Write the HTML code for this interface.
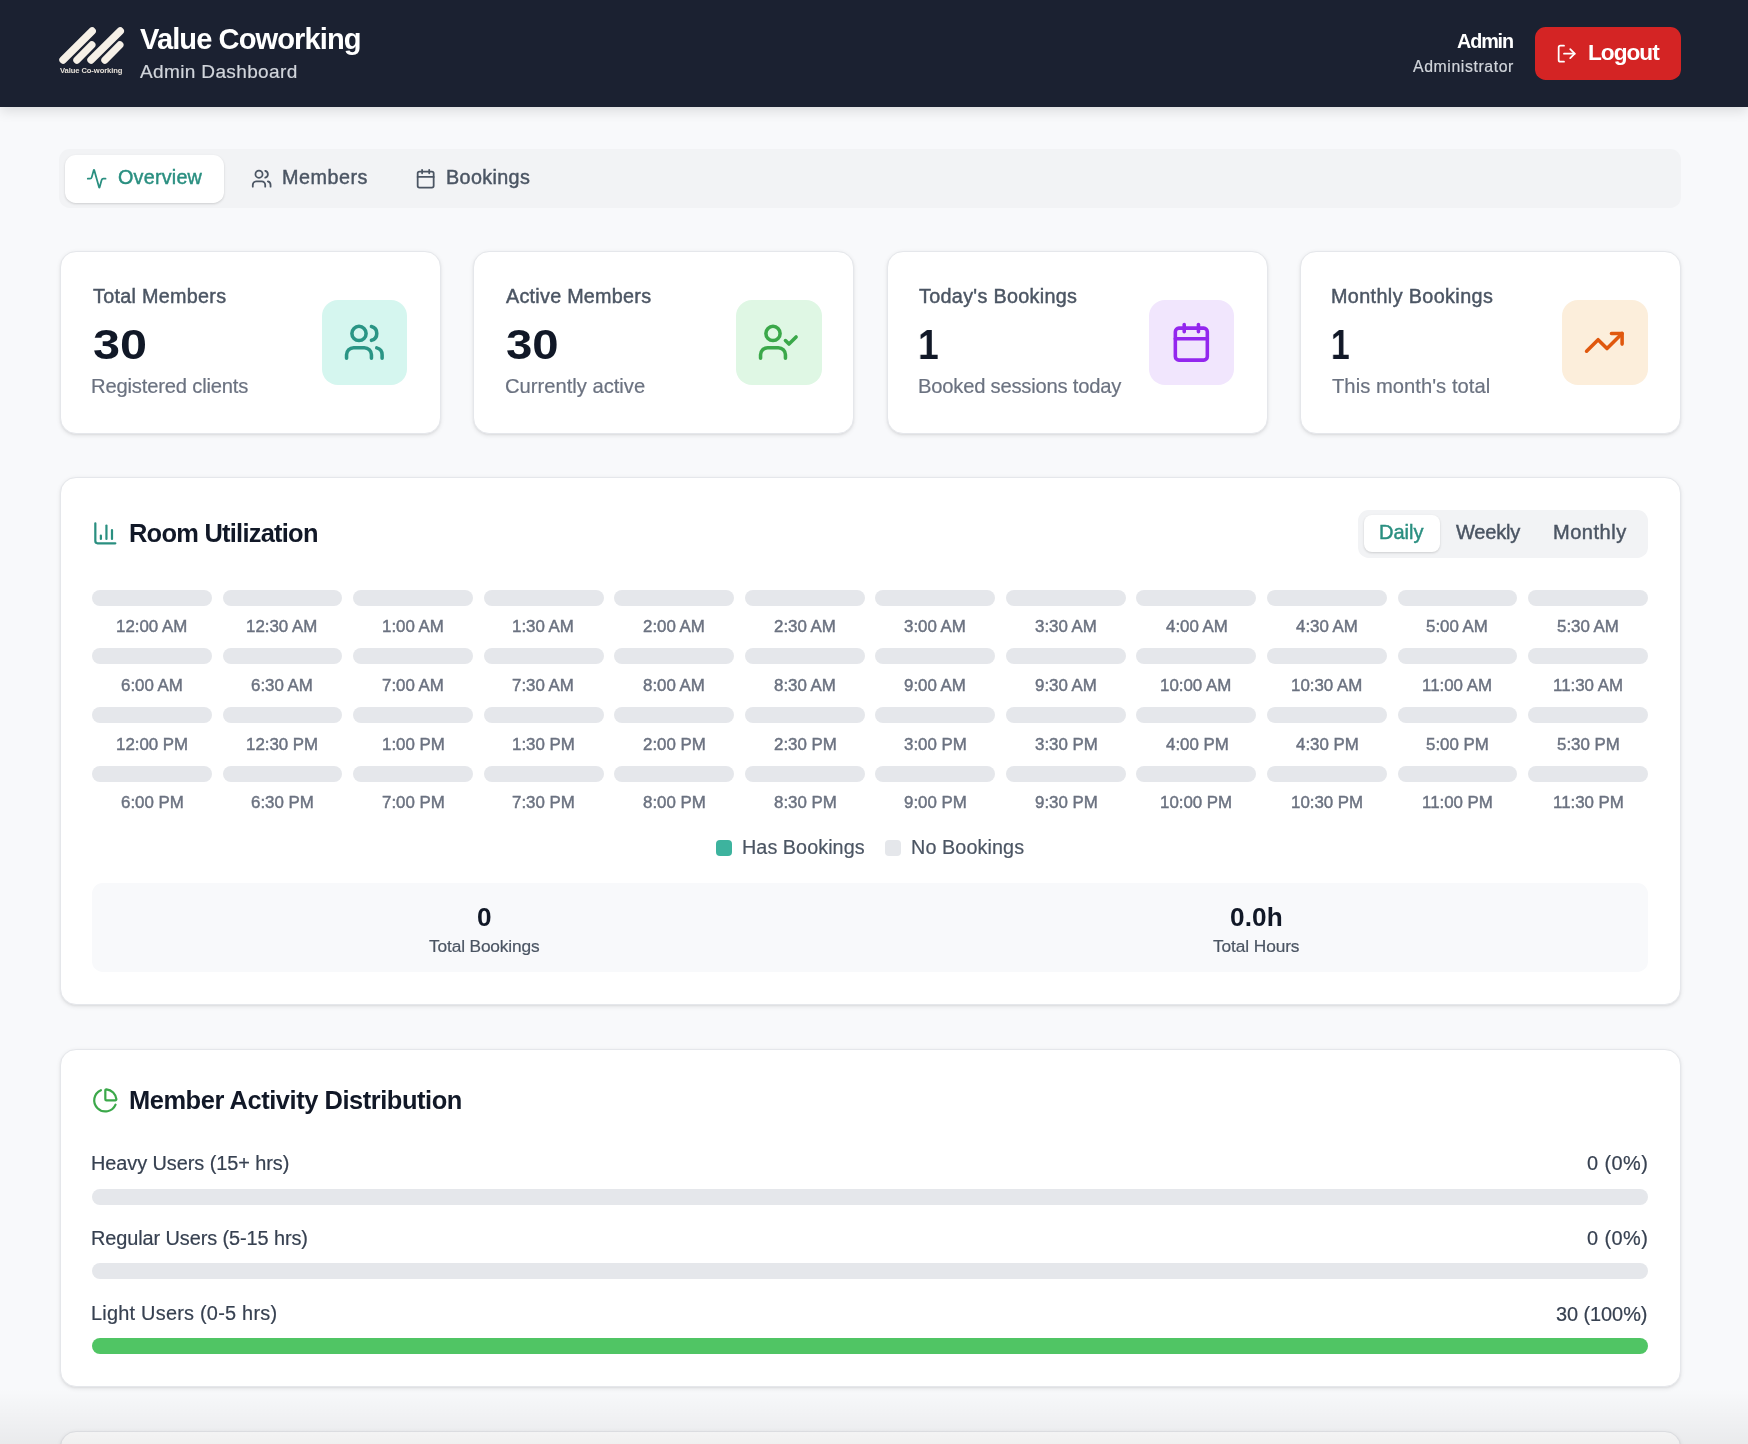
<!DOCTYPE html>
<html><head><meta charset="utf-8"><title>Value Coworking Admin Dashboard</title>
<style>
html,body{margin:0;padding:0;}
body{width:1748px;height:1444px;overflow:hidden;position:relative;background:#F8F9FB;font-family:"Liberation Sans",sans-serif;}
.b{position:absolute;}
.ic{position:absolute;overflow:visible;}
.t{position:absolute;white-space:nowrap;z-index:3;will-change:transform;}
</style></head><body>
<div class="b" style="left:0.00px;top:0.00px;width:1748.00px;height:107.00px;background:#1B2131;box-shadow:0 4px 12px rgba(0,0,0,0.12);z-index:1"></div>
<svg class="ic" style="left:0;top:0;width:200px;height:107px;z-index:2" viewBox="0 0 200 107"><g stroke="#F6F0E7" stroke-width="7.4" stroke-linecap="round"><line x1="63.0" y1="60.0" x2="92.2" y2="31.0"/><line x1="77.0" y1="60.0" x2="91.8" y2="45.0"/><line x1="91.0" y1="60.0" x2="120.3" y2="31.0"/><line x1="105.0" y1="60.0" x2="119.8" y2="45.0"/></g></svg>
<div class="b" style="left:1535.00px;top:27.00px;width:146.00px;height:53.00px;background:#D42424;border-radius:10.67px;z-index:2"></div>
<svg class="ic" style="z-index:3;left:1555.60px;top:43.20px;width:21.33px;height:21.33px" viewBox="0 0 24 24" fill="none" stroke="#ffffff" stroke-width="2" stroke-linecap="round" stroke-linejoin="round"><path d="M9 21H5a2 2 0 0 1-2-2V5a2 2 0 0 1 2-2h4"/><polyline points="16 17 21 12 16 7"/><line x1="21" x2="9" y1="12" y2="12"/></svg>
<div class="b" style="left:59.30px;top:149.20px;width:1621.40px;height:58.70px;background:#F2F3F5;border-radius:10.67px"></div>
<div class="b" style="left:65.00px;top:155.00px;width:159.00px;height:48.00px;background:#fff;border-radius:10.67px;box-shadow:0 1px 3px rgba(0,0,0,0.10),0 1px 2px rgba(0,0,0,0.06)"></div>
<svg class="ic" style="left:86.10px;top:168.00px;width:21.33px;height:21.33px" viewBox="0 0 24 24" fill="none" stroke="#2A8F80" stroke-width="2" stroke-linecap="round" stroke-linejoin="round"><path d="M22 12h-2.48a2 2 0 0 0-1.93 1.46l-2.35 8.36a.25.25 0 0 1-.48 0L9.24 2.18a.25.25 0 0 0-.48 0l-2.35 8.36A2 2 0 0 1 4.49 12H2"/></svg>
<svg class="ic" style="left:251.10px;top:168.20px;width:21.33px;height:21.33px" viewBox="0 0 24 24" fill="none" stroke="#4B5563" stroke-width="2" stroke-linecap="round" stroke-linejoin="round"><path d="M16 21v-2a4 4 0 0 0-4-4H6a4 4 0 0 0-4 4v2"/><circle cx="9" cy="7" r="4"/><path d="M22 21v-2a4 4 0 0 0-3-3.87"/><path d="M16 3.13a4 4 0 0 1 0 7.75"/></svg>
<svg class="ic" style="left:415.00px;top:168.20px;width:21.33px;height:21.33px" viewBox="0 0 24 24" fill="none" stroke="#4B5563" stroke-width="2" stroke-linecap="round" stroke-linejoin="round"><path d="M8 2v4"/><path d="M16 2v4"/><rect width="18" height="18" x="3" y="4" rx="2"/><path d="M3 10h18"/></svg>
<div class="b" style="left:59.80px;top:251.30px;width:381.00px;height:182.50px;background:#fff;border:1px solid #E5E7EB;border-radius:16px;box-shadow:0 1.5px 4px rgba(0,0,0,0.08),0 1px 2px rgba(0,0,0,0.05);box-sizing:border-box"></div>
<div class="b" style="left:473.40px;top:251.30px;width:381.00px;height:182.50px;background:#fff;border:1px solid #E5E7EB;border-radius:16px;box-shadow:0 1.5px 4px rgba(0,0,0,0.08),0 1px 2px rgba(0,0,0,0.05);box-sizing:border-box"></div>
<div class="b" style="left:886.90px;top:251.30px;width:381.00px;height:182.50px;background:#fff;border:1px solid #E5E7EB;border-radius:16px;box-shadow:0 1.5px 4px rgba(0,0,0,0.08),0 1px 2px rgba(0,0,0,0.05);box-sizing:border-box"></div>
<div class="b" style="left:1300.00px;top:251.30px;width:381.00px;height:182.50px;background:#fff;border:1px solid #E5E7EB;border-radius:16px;box-shadow:0 1.5px 4px rgba(0,0,0,0.08),0 1px 2px rgba(0,0,0,0.05);box-sizing:border-box"></div>
<div class="b" style="left:322.00px;top:300.00px;width:85.30px;height:84.90px;background:#D5F6EF;border-radius:16px"></div>
<svg class="ic" style="left:342.87px;top:321.07px;width:42.67px;height:42.67px" viewBox="0 0 24 24" fill="none" stroke="#2A9585" stroke-width="2" stroke-linecap="round" stroke-linejoin="round"><path d="M16 21v-2a4 4 0 0 0-4-4H6a4 4 0 0 0-4 4v2"/><circle cx="9" cy="7" r="4"/><path d="M22 21v-2a4 4 0 0 0-3-3.87"/><path d="M16 3.13a4 4 0 0 1 0 7.75"/></svg>
<div class="b" style="left:736.30px;top:300.00px;width:85.30px;height:84.90px;background:#DFF7E4;border-radius:16px"></div>
<svg class="ic" style="left:757.17px;top:321.07px;width:42.67px;height:42.67px" viewBox="0 0 24 24" fill="none" stroke="#3BA84A" stroke-width="2" stroke-linecap="round" stroke-linejoin="round"><path d="M16 21v-2a4 4 0 0 0-4-4H6a4 4 0 0 0-4 4v2"/><circle cx="9" cy="7" r="4"/><polyline points="16 11 18 13 22 9"/></svg>
<div class="b" style="left:1148.90px;top:300.00px;width:85.30px;height:84.90px;background:#F1E6FD;border-radius:16px"></div>
<svg class="ic" style="left:1169.77px;top:321.07px;width:42.67px;height:42.67px" viewBox="0 0 24 24" fill="none" stroke="#9327EE" stroke-width="2" stroke-linecap="round" stroke-linejoin="round"><path d="M8 2v4"/><path d="M16 2v4"/><rect width="18" height="18" x="3" y="4" rx="2"/><path d="M3 10h18"/></svg>
<div class="b" style="left:1562.30px;top:300.00px;width:85.30px;height:84.90px;background:#FCEEDB;border-radius:16px"></div>
<svg class="ic" style="left:1583.17px;top:321.07px;width:42.67px;height:42.67px" viewBox="0 0 24 24" fill="none" stroke="#E0580E" stroke-width="2" stroke-linecap="round" stroke-linejoin="round"><polyline points="22 7 13.5 15.5 8.5 10.5 2 17"/><polyline points="16 7 22 7 22 13"/></svg>
<div class="b" style="left:59.50px;top:477.20px;width:1621.10px;height:528.00px;background:#fff;border:1px solid #E5E7EB;border-radius:16px;box-shadow:0 1.5px 4px rgba(0,0,0,0.08),0 1px 2px rgba(0,0,0,0.05);box-sizing:border-box"></div>
<svg class="ic" style="left:91.90px;top:520.10px;width:26.67px;height:26.67px" viewBox="0 0 24 24" fill="none" stroke="#2A8F80" stroke-width="2" stroke-linecap="round" stroke-linejoin="round"><path d="M3 3v16a2 2 0 0 0 2 2h16"/><path d="M18 17V9"/><path d="M13 17V5"/><path d="M8 17v-3"/></svg>
<div class="b" style="left:1358.00px;top:510.00px;width:290.00px;height:48.00px;background:#F2F3F5;border-radius:10.67px"></div>
<div class="b" style="left:1364.00px;top:515.00px;width:76.30px;height:36.80px;background:#fff;border-radius:8px;box-shadow:0 1px 3px rgba(0,0,0,0.10),0 1px 2px rgba(0,0,0,0.06)"></div>
<div class="b" style="left:92.00px;top:590.00px;width:119.89px;height:16.00px;background:#E5E7EB;border-radius:8px"></div>
<div class="b" style="left:222.56px;top:590.00px;width:119.89px;height:16.00px;background:#E5E7EB;border-radius:8px"></div>
<div class="b" style="left:353.11px;top:590.00px;width:119.89px;height:16.00px;background:#E5E7EB;border-radius:8px"></div>
<div class="b" style="left:483.67px;top:590.00px;width:119.89px;height:16.00px;background:#E5E7EB;border-radius:8px"></div>
<div class="b" style="left:614.22px;top:590.00px;width:119.89px;height:16.00px;background:#E5E7EB;border-radius:8px"></div>
<div class="b" style="left:744.78px;top:590.00px;width:119.89px;height:16.00px;background:#E5E7EB;border-radius:8px"></div>
<div class="b" style="left:875.34px;top:590.00px;width:119.89px;height:16.00px;background:#E5E7EB;border-radius:8px"></div>
<div class="b" style="left:1005.89px;top:590.00px;width:119.89px;height:16.00px;background:#E5E7EB;border-radius:8px"></div>
<div class="b" style="left:1136.45px;top:590.00px;width:119.89px;height:16.00px;background:#E5E7EB;border-radius:8px"></div>
<div class="b" style="left:1267.00px;top:590.00px;width:119.89px;height:16.00px;background:#E5E7EB;border-radius:8px"></div>
<div class="b" style="left:1397.56px;top:590.00px;width:119.89px;height:16.00px;background:#E5E7EB;border-radius:8px"></div>
<div class="b" style="left:1528.11px;top:590.00px;width:119.89px;height:16.00px;background:#E5E7EB;border-radius:8px"></div>
<div class="b" style="left:92.00px;top:648.00px;width:119.89px;height:16.00px;background:#E5E7EB;border-radius:8px"></div>
<div class="b" style="left:222.56px;top:648.00px;width:119.89px;height:16.00px;background:#E5E7EB;border-radius:8px"></div>
<div class="b" style="left:353.11px;top:648.00px;width:119.89px;height:16.00px;background:#E5E7EB;border-radius:8px"></div>
<div class="b" style="left:483.67px;top:648.00px;width:119.89px;height:16.00px;background:#E5E7EB;border-radius:8px"></div>
<div class="b" style="left:614.22px;top:648.00px;width:119.89px;height:16.00px;background:#E5E7EB;border-radius:8px"></div>
<div class="b" style="left:744.78px;top:648.00px;width:119.89px;height:16.00px;background:#E5E7EB;border-radius:8px"></div>
<div class="b" style="left:875.34px;top:648.00px;width:119.89px;height:16.00px;background:#E5E7EB;border-radius:8px"></div>
<div class="b" style="left:1005.89px;top:648.00px;width:119.89px;height:16.00px;background:#E5E7EB;border-radius:8px"></div>
<div class="b" style="left:1136.45px;top:648.00px;width:119.89px;height:16.00px;background:#E5E7EB;border-radius:8px"></div>
<div class="b" style="left:1267.00px;top:648.00px;width:119.89px;height:16.00px;background:#E5E7EB;border-radius:8px"></div>
<div class="b" style="left:1397.56px;top:648.00px;width:119.89px;height:16.00px;background:#E5E7EB;border-radius:8px"></div>
<div class="b" style="left:1528.11px;top:648.00px;width:119.89px;height:16.00px;background:#E5E7EB;border-radius:8px"></div>
<div class="b" style="left:92.00px;top:707.00px;width:119.89px;height:16.00px;background:#E5E7EB;border-radius:8px"></div>
<div class="b" style="left:222.56px;top:707.00px;width:119.89px;height:16.00px;background:#E5E7EB;border-radius:8px"></div>
<div class="b" style="left:353.11px;top:707.00px;width:119.89px;height:16.00px;background:#E5E7EB;border-radius:8px"></div>
<div class="b" style="left:483.67px;top:707.00px;width:119.89px;height:16.00px;background:#E5E7EB;border-radius:8px"></div>
<div class="b" style="left:614.22px;top:707.00px;width:119.89px;height:16.00px;background:#E5E7EB;border-radius:8px"></div>
<div class="b" style="left:744.78px;top:707.00px;width:119.89px;height:16.00px;background:#E5E7EB;border-radius:8px"></div>
<div class="b" style="left:875.34px;top:707.00px;width:119.89px;height:16.00px;background:#E5E7EB;border-radius:8px"></div>
<div class="b" style="left:1005.89px;top:707.00px;width:119.89px;height:16.00px;background:#E5E7EB;border-radius:8px"></div>
<div class="b" style="left:1136.45px;top:707.00px;width:119.89px;height:16.00px;background:#E5E7EB;border-radius:8px"></div>
<div class="b" style="left:1267.00px;top:707.00px;width:119.89px;height:16.00px;background:#E5E7EB;border-radius:8px"></div>
<div class="b" style="left:1397.56px;top:707.00px;width:119.89px;height:16.00px;background:#E5E7EB;border-radius:8px"></div>
<div class="b" style="left:1528.11px;top:707.00px;width:119.89px;height:16.00px;background:#E5E7EB;border-radius:8px"></div>
<div class="b" style="left:92.00px;top:766.00px;width:119.89px;height:16.00px;background:#E5E7EB;border-radius:8px"></div>
<div class="b" style="left:222.56px;top:766.00px;width:119.89px;height:16.00px;background:#E5E7EB;border-radius:8px"></div>
<div class="b" style="left:353.11px;top:766.00px;width:119.89px;height:16.00px;background:#E5E7EB;border-radius:8px"></div>
<div class="b" style="left:483.67px;top:766.00px;width:119.89px;height:16.00px;background:#E5E7EB;border-radius:8px"></div>
<div class="b" style="left:614.22px;top:766.00px;width:119.89px;height:16.00px;background:#E5E7EB;border-radius:8px"></div>
<div class="b" style="left:744.78px;top:766.00px;width:119.89px;height:16.00px;background:#E5E7EB;border-radius:8px"></div>
<div class="b" style="left:875.34px;top:766.00px;width:119.89px;height:16.00px;background:#E5E7EB;border-radius:8px"></div>
<div class="b" style="left:1005.89px;top:766.00px;width:119.89px;height:16.00px;background:#E5E7EB;border-radius:8px"></div>
<div class="b" style="left:1136.45px;top:766.00px;width:119.89px;height:16.00px;background:#E5E7EB;border-radius:8px"></div>
<div class="b" style="left:1267.00px;top:766.00px;width:119.89px;height:16.00px;background:#E5E7EB;border-radius:8px"></div>
<div class="b" style="left:1397.56px;top:766.00px;width:119.89px;height:16.00px;background:#E5E7EB;border-radius:8px"></div>
<div class="b" style="left:1528.11px;top:766.00px;width:119.89px;height:16.00px;background:#E5E7EB;border-radius:8px"></div>
<div class="b" style="left:716.00px;top:840.00px;width:16.00px;height:16.00px;background:#3DB39E;border-radius:4px"></div>
<div class="b" style="left:885.00px;top:840.00px;width:16.00px;height:16.00px;background:#E5E7EB;border-radius:4px"></div>
<div class="b" style="left:92.00px;top:883.40px;width:1556.00px;height:89.00px;background:#F8F9FB;border-radius:10.67px"></div>
<div class="b" style="left:59.50px;top:1049.30px;width:1621.10px;height:337.30px;background:#fff;border:1px solid #E5E7EB;border-radius:16px;box-shadow:0 1.5px 4px rgba(0,0,0,0.08),0 1px 2px rgba(0,0,0,0.05);box-sizing:border-box"></div>
<svg class="ic" style="left:91.90px;top:1087.20px;width:26.67px;height:26.67px" viewBox="0 0 24 24" fill="none" stroke="#3BA84A" stroke-width="2" stroke-linecap="round" stroke-linejoin="round"><path d="M21 12c.552 0 1.005-.449.95-.998a10 10 0 0 0-8.953-8.951c-.55-.055-.998.398-.998.95v8a1 1 0 0 0 1 1z"/><path d="M21.21 15.89A10 10 0 1 1 8 2.83"/></svg>
<div class="b" style="left:92.00px;top:1189.00px;width:1556.00px;height:16.00px;background:#E5E7EB;border-radius:8px"></div>
<div class="b" style="left:92.00px;top:1263.20px;width:1556.00px;height:16.00px;background:#E5E7EB;border-radius:8px"></div>
<div class="b" style="left:92.00px;top:1337.90px;width:1556.00px;height:16.00px;background:#50C564;border-radius:8px"></div>
<div class="b" style="left:59.50px;top:1430.50px;width:1621.10px;height:269.50px;background:#fff;border:1px solid #E5E7EB;border-radius:16px;box-shadow:0 1.5px 4px rgba(0,0,0,0.08),0 1px 2px rgba(0,0,0,0.05);box-sizing:border-box"></div>
<div class="b" style="left:0.00px;top:1388.00px;width:1748.00px;height:56.00px;background:linear-gradient(to bottom, rgba(0,0,0,0), rgba(0,0,0,0.06));z-index:5"></div>
<div class="t" id="t0" style="left:140.30px;top:25px;font-size:29.07px;line-height:29.07px;font-weight:700;color:#ffffff;letter-spacing:-0.904px;">Value Coworking</div>
<div class="t" id="t1" style="left:140.30px;top:62px;font-size:19.04px;line-height:19.04px;font-weight:400;color:#D1D5DB;letter-spacing:0.349px;-webkit-text-stroke:0.2px currentColor;">Admin Dashboard</div>
<div class="t" id="t2" style="left:1457.00px;top:32px;font-size:19.77px;line-height:19.77px;font-weight:600;color:#ffffff;letter-spacing:-1.104px;">Admin</div>
<div class="t" id="t3" style="left:1412.70px;top:59px;font-size:15.84px;line-height:15.84px;font-weight:400;color:#D1D5DB;letter-spacing:0.588px;-webkit-text-stroke:0.2px currentColor;">Administrator</div>
<div class="t" id="t4" style="left:1587.60px;top:41px;font-size:22.67px;line-height:22.67px;font-weight:600;color:#ffffff;letter-spacing:-1.010px;">Logout</div>
<div class="t" id="t5" style="left:60.20px;top:67px;font-size:7.60px;line-height:7.60px;font-weight:700;color:#E6E1D9;letter-spacing:-0.088px;">Value Co-working</div>
<div class="t" id="t6" style="left:118.00px;top:168px;font-size:19.77px;line-height:19.77px;font-weight:500;color:#2A8F80;letter-spacing:0.214px;-webkit-text-stroke:0.45px currentColor;">Overview</div>
<div class="t" id="t7" style="left:281.80px;top:168px;font-size:19.77px;line-height:19.77px;font-weight:500;color:#4B5563;letter-spacing:0.502px;-webkit-text-stroke:0.45px currentColor;">Members</div>
<div class="t" id="t8" style="left:446.10px;top:168px;font-size:19.77px;line-height:19.77px;font-weight:500;color:#4B5563;letter-spacing:0.353px;-webkit-text-stroke:0.45px currentColor;">Bookings</div>
<div class="t" id="t9" style="left:92.60px;top:287px;font-size:19.77px;line-height:19.77px;font-weight:500;color:#4B5563;letter-spacing:0.289px;-webkit-text-stroke:0.45px currentColor;">Total Members</div>
<div class="t" id="t10" style="left:92.74px;top:323px;font-size:43.02px;line-height:43.02px;font-weight:700;color:#111827;letter-spacing:0.000px;transform:scaleX(1.1290);transform-origin:0 0;">30</div>
<div class="t" id="t11" style="left:91.40px;top:376px;font-size:20.20px;line-height:20.20px;font-weight:400;color:#6B7280;letter-spacing:-0.180px;-webkit-text-stroke:0.2px currentColor;">Registered clients</div>
<div class="t" id="t12" style="left:506.10px;top:287px;font-size:19.77px;line-height:19.77px;font-weight:500;color:#4B5563;letter-spacing:0.261px;-webkit-text-stroke:0.45px currentColor;">Active Members</div>
<div class="t" id="t13" style="left:505.86px;top:323px;font-size:43.02px;line-height:43.02px;font-weight:700;color:#111827;letter-spacing:0.000px;transform:scaleX(1.1004);transform-origin:0 0;">30</div>
<div class="t" id="t14" style="left:505.10px;top:376px;font-size:20.20px;line-height:20.20px;font-weight:400;color:#6B7280;letter-spacing:-0.007px;-webkit-text-stroke:0.2px currentColor;">Currently active</div>
<div class="t" id="t15" style="left:919.20px;top:287px;font-size:19.77px;line-height:19.77px;font-weight:500;color:#4B5563;letter-spacing:0.319px;-webkit-text-stroke:0.45px currentColor;">Today's Bookings</div>
<div class="t" id="t16" style="left:917.78px;top:323px;font-size:43.02px;line-height:43.02px;font-weight:700;color:#111827;letter-spacing:0.000px;transform:scaleX(0.8628);transform-origin:0 0;">1</div>
<div class="t" id="t17" style="left:918.00px;top:376px;font-size:20.20px;line-height:20.20px;font-weight:400;color:#6B7280;letter-spacing:-0.213px;-webkit-text-stroke:0.2px currentColor;">Booked sessions today</div>
<div class="t" id="t18" style="left:1331.20px;top:287px;font-size:19.77px;line-height:19.77px;font-weight:500;color:#4B5563;letter-spacing:0.385px;-webkit-text-stroke:0.45px currentColor;">Monthly Bookings</div>
<div class="t" id="t19" style="left:1331.21px;top:323px;font-size:43.02px;line-height:43.02px;font-weight:700;color:#111827;letter-spacing:0.000px;transform:scaleX(0.7785);transform-origin:0 0;">1</div>
<div class="t" id="t20" style="left:1332.40px;top:376px;font-size:20.20px;line-height:20.20px;font-weight:400;color:#6B7280;letter-spacing:0.036px;-webkit-text-stroke:0.2px currentColor;">This month's total</div>
<div class="t" id="t21" style="left:129.10px;top:521px;font-size:25.44px;line-height:25.44px;font-weight:600;color:#111827;letter-spacing:-0.747px;">Room Utilization</div>
<div class="t" id="t22" style="left:1379.00px;top:522px;font-size:20.06px;line-height:20.06px;font-weight:500;color:#2A8F80;letter-spacing:-0.038px;-webkit-text-stroke:0.45px currentColor;">Daily</div>
<div class="t" id="t23" style="left:1456.40px;top:522px;font-size:20.06px;line-height:20.06px;font-weight:500;color:#4B5563;letter-spacing:-0.193px;-webkit-text-stroke:0.45px currentColor;">Weekly</div>
<div class="t" id="t24" style="left:1552.60px;top:522px;font-size:20.06px;line-height:20.06px;font-weight:500;color:#4B5563;letter-spacing:0.500px;-webkit-text-stroke:0.45px currentColor;">Monthly</div>
<div class="t" id="t25" style="left:741.50px;top:838px;font-size:19.77px;line-height:19.77px;font-weight:400;color:#4B5563;letter-spacing:0.057px;-webkit-text-stroke:0.2px currentColor;">Has Bookings</div>
<div class="t" id="t26" style="left:910.80px;top:838px;font-size:19.77px;line-height:19.77px;font-weight:400;color:#4B5563;letter-spacing:0.101px;-webkit-text-stroke:0.2px currentColor;">No Bookings</div>
<div class="t" id="t27" style="left:476.75px;top:904px;font-size:26.16px;line-height:26.16px;font-weight:700;color:#111827;letter-spacing:0.000px;">0</div>
<div class="t" id="t28" style="left:1229.83px;top:904px;font-size:26.16px;line-height:26.16px;font-weight:700;color:#111827;letter-spacing:0.144px;">0.0h</div>
<div class="t" id="t29" style="left:428.75px;top:938px;font-size:17.30px;line-height:17.30px;font-weight:400;color:#4B5563;letter-spacing:-0.134px;-webkit-text-stroke:0.2px currentColor;">Total Bookings</div>
<div class="t" id="t30" style="left:1212.85px;top:938px;font-size:17.30px;line-height:17.30px;font-weight:400;color:#4B5563;letter-spacing:-0.093px;-webkit-text-stroke:0.2px currentColor;">Total Hours</div>
<div class="t" id="t31" style="left:129.30px;top:1088px;font-size:25.44px;line-height:25.44px;font-weight:600;color:#111827;letter-spacing:-0.445px;">Member Activity Distribution</div>
<div class="t" id="t32" style="left:91.40px;top:1154px;font-size:19.91px;line-height:19.91px;font-weight:400;color:#374151;letter-spacing:-0.070px;-webkit-text-stroke:0.2px currentColor;">Heavy Users (15+ hrs)</div>
<div class="t" id="t33" style="left:91.40px;top:1229px;font-size:19.91px;line-height:19.91px;font-weight:400;color:#374151;letter-spacing:-0.090px;-webkit-text-stroke:0.2px currentColor;">Regular Users (5-15 hrs)</div>
<div class="t" id="t34" style="left:91.40px;top:1304px;font-size:19.91px;line-height:19.91px;font-weight:400;color:#374151;letter-spacing:0.233px;-webkit-text-stroke:0.2px currentColor;">Light Users (0-5 hrs)</div>
<div class="t" id="t35" style="left:1586.70px;top:1154px;font-size:19.91px;line-height:19.91px;font-weight:400;color:#374151;letter-spacing:0.436px;-webkit-text-stroke:0.2px currentColor;">0 (0%)</div>
<div class="t" id="t36" style="left:1586.70px;top:1229px;font-size:19.91px;line-height:19.91px;font-weight:400;color:#374151;letter-spacing:0.436px;-webkit-text-stroke:0.2px currentColor;">0 (0%)</div>
<div class="t" id="t37" style="left:1556.10px;top:1305px;font-size:19.91px;line-height:19.91px;font-weight:400;color:#374151;letter-spacing:-0.055px;-webkit-text-stroke:0.2px currentColor;">30 (100%)</div>
<div class="t" id="t38" style="left:115.93px;top:619px;font-size:16.86px;line-height:16.86px;font-weight:500;color:#6B7280;letter-spacing:0.000px;-webkit-text-stroke:0.45px currentColor;">12:00 AM</div>
<div class="t" id="t39" style="left:246.49px;top:619px;font-size:16.86px;line-height:16.86px;font-weight:500;color:#6B7280;letter-spacing:0.000px;-webkit-text-stroke:0.45px currentColor;">12:30 AM</div>
<div class="t" id="t40" style="left:381.73px;top:619px;font-size:16.86px;line-height:16.86px;font-weight:500;color:#6B7280;letter-spacing:0.000px;-webkit-text-stroke:0.45px currentColor;">1:00 AM</div>
<div class="t" id="t41" style="left:512.29px;top:619px;font-size:16.86px;line-height:16.86px;font-weight:500;color:#6B7280;letter-spacing:0.000px;-webkit-text-stroke:0.45px currentColor;">1:30 AM</div>
<div class="t" id="t42" style="left:643.05px;top:619px;font-size:16.86px;line-height:16.86px;font-weight:500;color:#6B7280;letter-spacing:0.000px;-webkit-text-stroke:0.45px currentColor;">2:00 AM</div>
<div class="t" id="t43" style="left:773.60px;top:619px;font-size:16.86px;line-height:16.86px;font-weight:500;color:#6B7280;letter-spacing:0.000px;-webkit-text-stroke:0.45px currentColor;">2:30 AM</div>
<div class="t" id="t44" style="left:904.26px;top:619px;font-size:16.86px;line-height:16.86px;font-weight:500;color:#6B7280;letter-spacing:0.000px;-webkit-text-stroke:0.45px currentColor;">3:00 AM</div>
<div class="t" id="t45" style="left:1034.81px;top:619px;font-size:16.86px;line-height:16.86px;font-weight:500;color:#6B7280;letter-spacing:0.000px;-webkit-text-stroke:0.45px currentColor;">3:30 AM</div>
<div class="t" id="t46" style="left:1165.52px;top:619px;font-size:16.86px;line-height:16.86px;font-weight:500;color:#6B7280;letter-spacing:0.000px;-webkit-text-stroke:0.45px currentColor;">4:00 AM</div>
<div class="t" id="t47" style="left:1296.07px;top:619px;font-size:16.86px;line-height:16.86px;font-weight:500;color:#6B7280;letter-spacing:0.000px;-webkit-text-stroke:0.45px currentColor;">4:30 AM</div>
<div class="t" id="t48" style="left:1426.48px;top:619px;font-size:16.86px;line-height:16.86px;font-weight:500;color:#6B7280;letter-spacing:0.000px;-webkit-text-stroke:0.45px currentColor;">5:00 AM</div>
<div class="t" id="t49" style="left:1557.04px;top:619px;font-size:16.86px;line-height:16.86px;font-weight:500;color:#6B7280;letter-spacing:0.000px;-webkit-text-stroke:0.45px currentColor;">5:30 AM</div>
<div class="t" id="t50" style="left:120.82px;top:678px;font-size:16.86px;line-height:16.86px;font-weight:500;color:#6B7280;letter-spacing:0.000px;-webkit-text-stroke:0.45px currentColor;">6:00 AM</div>
<div class="t" id="t51" style="left:251.38px;top:678px;font-size:16.86px;line-height:16.86px;font-weight:500;color:#6B7280;letter-spacing:0.000px;-webkit-text-stroke:0.45px currentColor;">6:30 AM</div>
<div class="t" id="t52" style="left:381.93px;top:678px;font-size:16.86px;line-height:16.86px;font-weight:500;color:#6B7280;letter-spacing:0.000px;-webkit-text-stroke:0.45px currentColor;">7:00 AM</div>
<div class="t" id="t53" style="left:512.49px;top:678px;font-size:16.86px;line-height:16.86px;font-weight:500;color:#6B7280;letter-spacing:0.000px;-webkit-text-stroke:0.45px currentColor;">7:30 AM</div>
<div class="t" id="t54" style="left:643.10px;top:678px;font-size:16.86px;line-height:16.86px;font-weight:500;color:#6B7280;letter-spacing:0.000px;-webkit-text-stroke:0.45px currentColor;">8:00 AM</div>
<div class="t" id="t55" style="left:773.65px;top:678px;font-size:16.86px;line-height:16.86px;font-weight:500;color:#6B7280;letter-spacing:0.000px;-webkit-text-stroke:0.45px currentColor;">8:30 AM</div>
<div class="t" id="t56" style="left:904.21px;top:678px;font-size:16.86px;line-height:16.86px;font-weight:500;color:#6B7280;letter-spacing:0.000px;-webkit-text-stroke:0.45px currentColor;">9:00 AM</div>
<div class="t" id="t57" style="left:1034.76px;top:678px;font-size:16.86px;line-height:16.86px;font-weight:500;color:#6B7280;letter-spacing:0.000px;-webkit-text-stroke:0.45px currentColor;">9:30 AM</div>
<div class="t" id="t58" style="left:1160.38px;top:678px;font-size:16.86px;line-height:16.86px;font-weight:500;color:#6B7280;letter-spacing:0.000px;-webkit-text-stroke:0.45px currentColor;">10:00 AM</div>
<div class="t" id="t59" style="left:1290.94px;top:678px;font-size:16.86px;line-height:16.86px;font-weight:500;color:#6B7280;letter-spacing:0.000px;-webkit-text-stroke:0.45px currentColor;">10:30 AM</div>
<div class="t" id="t60" style="left:1422.12px;top:678px;font-size:16.86px;line-height:16.86px;font-weight:500;color:#6B7280;letter-spacing:0.000px;-webkit-text-stroke:0.45px currentColor;">11:00 AM</div>
<div class="t" id="t61" style="left:1552.67px;top:678px;font-size:16.86px;line-height:16.86px;font-weight:500;color:#6B7280;letter-spacing:0.000px;-webkit-text-stroke:0.45px currentColor;">11:30 AM</div>
<div class="t" id="t62" style="left:115.93px;top:737px;font-size:16.86px;line-height:16.86px;font-weight:500;color:#6B7280;letter-spacing:0.000px;-webkit-text-stroke:0.45px currentColor;">12:00 PM</div>
<div class="t" id="t63" style="left:246.49px;top:737px;font-size:16.86px;line-height:16.86px;font-weight:500;color:#6B7280;letter-spacing:0.000px;-webkit-text-stroke:0.45px currentColor;">12:30 PM</div>
<div class="t" id="t64" style="left:381.73px;top:737px;font-size:16.86px;line-height:16.86px;font-weight:500;color:#6B7280;letter-spacing:0.000px;-webkit-text-stroke:0.45px currentColor;">1:00 PM</div>
<div class="t" id="t65" style="left:512.29px;top:737px;font-size:16.86px;line-height:16.86px;font-weight:500;color:#6B7280;letter-spacing:0.000px;-webkit-text-stroke:0.45px currentColor;">1:30 PM</div>
<div class="t" id="t66" style="left:643.05px;top:737px;font-size:16.86px;line-height:16.86px;font-weight:500;color:#6B7280;letter-spacing:0.000px;-webkit-text-stroke:0.45px currentColor;">2:00 PM</div>
<div class="t" id="t67" style="left:773.60px;top:737px;font-size:16.86px;line-height:16.86px;font-weight:500;color:#6B7280;letter-spacing:0.000px;-webkit-text-stroke:0.45px currentColor;">2:30 PM</div>
<div class="t" id="t68" style="left:904.26px;top:737px;font-size:16.86px;line-height:16.86px;font-weight:500;color:#6B7280;letter-spacing:0.000px;-webkit-text-stroke:0.45px currentColor;">3:00 PM</div>
<div class="t" id="t69" style="left:1034.81px;top:737px;font-size:16.86px;line-height:16.86px;font-weight:500;color:#6B7280;letter-spacing:0.000px;-webkit-text-stroke:0.45px currentColor;">3:30 PM</div>
<div class="t" id="t70" style="left:1165.52px;top:737px;font-size:16.86px;line-height:16.86px;font-weight:500;color:#6B7280;letter-spacing:0.000px;-webkit-text-stroke:0.45px currentColor;">4:00 PM</div>
<div class="t" id="t71" style="left:1296.07px;top:737px;font-size:16.86px;line-height:16.86px;font-weight:500;color:#6B7280;letter-spacing:0.000px;-webkit-text-stroke:0.45px currentColor;">4:30 PM</div>
<div class="t" id="t72" style="left:1426.48px;top:737px;font-size:16.86px;line-height:16.86px;font-weight:500;color:#6B7280;letter-spacing:0.000px;-webkit-text-stroke:0.45px currentColor;">5:00 PM</div>
<div class="t" id="t73" style="left:1557.04px;top:737px;font-size:16.86px;line-height:16.86px;font-weight:500;color:#6B7280;letter-spacing:0.000px;-webkit-text-stroke:0.45px currentColor;">5:30 PM</div>
<div class="t" id="t74" style="left:120.82px;top:795px;font-size:16.86px;line-height:16.86px;font-weight:500;color:#6B7280;letter-spacing:0.000px;-webkit-text-stroke:0.45px currentColor;">6:00 PM</div>
<div class="t" id="t75" style="left:251.38px;top:795px;font-size:16.86px;line-height:16.86px;font-weight:500;color:#6B7280;letter-spacing:0.000px;-webkit-text-stroke:0.45px currentColor;">6:30 PM</div>
<div class="t" id="t76" style="left:381.93px;top:795px;font-size:16.86px;line-height:16.86px;font-weight:500;color:#6B7280;letter-spacing:0.000px;-webkit-text-stroke:0.45px currentColor;">7:00 PM</div>
<div class="t" id="t77" style="left:512.49px;top:795px;font-size:16.86px;line-height:16.86px;font-weight:500;color:#6B7280;letter-spacing:0.000px;-webkit-text-stroke:0.45px currentColor;">7:30 PM</div>
<div class="t" id="t78" style="left:643.10px;top:795px;font-size:16.86px;line-height:16.86px;font-weight:500;color:#6B7280;letter-spacing:0.000px;-webkit-text-stroke:0.45px currentColor;">8:00 PM</div>
<div class="t" id="t79" style="left:773.65px;top:795px;font-size:16.86px;line-height:16.86px;font-weight:500;color:#6B7280;letter-spacing:0.000px;-webkit-text-stroke:0.45px currentColor;">8:30 PM</div>
<div class="t" id="t80" style="left:904.21px;top:795px;font-size:16.86px;line-height:16.86px;font-weight:500;color:#6B7280;letter-spacing:0.000px;-webkit-text-stroke:0.45px currentColor;">9:00 PM</div>
<div class="t" id="t81" style="left:1034.76px;top:795px;font-size:16.86px;line-height:16.86px;font-weight:500;color:#6B7280;letter-spacing:0.000px;-webkit-text-stroke:0.45px currentColor;">9:30 PM</div>
<div class="t" id="t82" style="left:1160.38px;top:795px;font-size:16.86px;line-height:16.86px;font-weight:500;color:#6B7280;letter-spacing:0.000px;-webkit-text-stroke:0.45px currentColor;">10:00 PM</div>
<div class="t" id="t83" style="left:1290.94px;top:795px;font-size:16.86px;line-height:16.86px;font-weight:500;color:#6B7280;letter-spacing:0.000px;-webkit-text-stroke:0.45px currentColor;">10:30 PM</div>
<div class="t" id="t84" style="left:1422.12px;top:795px;font-size:16.86px;line-height:16.86px;font-weight:500;color:#6B7280;letter-spacing:0.000px;-webkit-text-stroke:0.45px currentColor;">11:00 PM</div>
<div class="t" id="t85" style="left:1552.67px;top:795px;font-size:16.86px;line-height:16.86px;font-weight:500;color:#6B7280;letter-spacing:0.000px;-webkit-text-stroke:0.45px currentColor;">11:30 PM</div>
</body></html>
